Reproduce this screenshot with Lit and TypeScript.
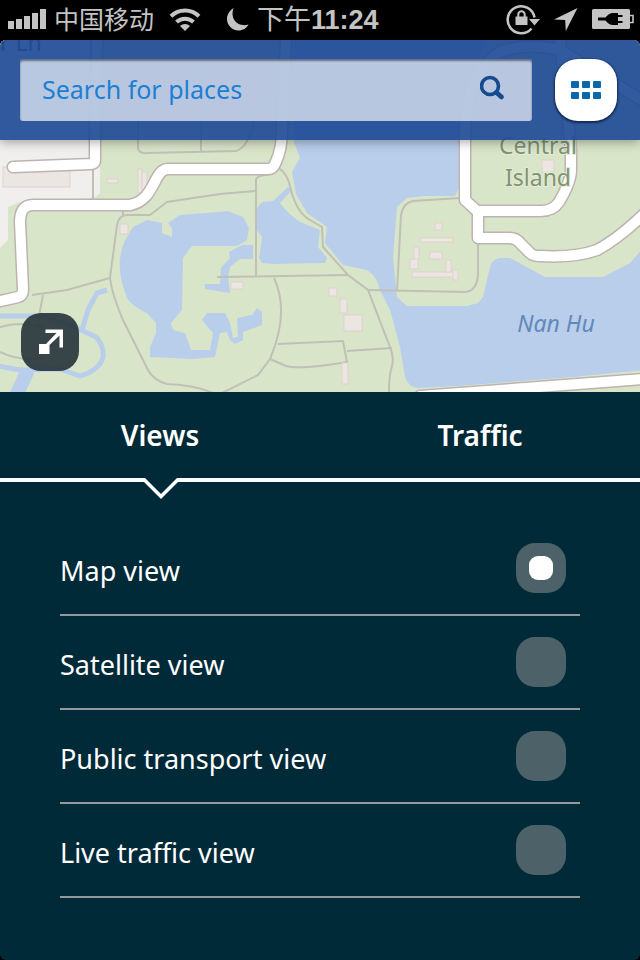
import { LitElement, html, css, svg } from "lit";
import { customElement, state } from "lit/decorators.js";
import { classMap } from "lit/directives/class-map.js";

@customElement("status-bar")
class StatusBar extends LitElement {
  static styles = css`
    :host {
      display: flex;
      align-items: center;
      height: 40px;
      padding: 0 6px 0 8px;
      background: #000;
      color: #c4c4c4;
      font-family: "Liberation Sans", "Noto Sans CJK SC", sans-serif;
      line-height: 40px;
      white-space: nowrap;
    }
    svg {
      display: block;
      flex: none;
      fill: currentColor;
    }
    .carrier {
      margin: 0 15px 0 8px;
      font-size: 25px;
    }
    .moon {
      margin: 0 8px 0 26px;
    }
    .time {
      display: flex;
      font-size: 27px;
    }
    .clock {
      font-weight: bold;
    }
    .right {
      display: flex;
      align-items: center;
      gap: 14px;
      margin-left: auto;
    }
  `;

  render() {
    return html`
      <svg width="38" height="22" viewBox="0 0 38 22">
        <path d="M0 12h6v8H0zM8 10h6v10H8zM16 7h6v13h-6zM24 4h6v16h-6zM32 0h6v20h-6z" />
      </svg>
      <span class="carrier">中国移动</span>
      <svg width="32" height="24" viewBox="0 0 32 24">
        <path
          d="M2 8.200a20 20 0 0 1 28 0M7.500 14a12.500 12.500 0 0 1 17 0"
          fill="none" stroke="currentColor" stroke-width="4" />
        <path d="M11 18a7.400 7.400 0 0 1 10 0l-5 5z" />
      </svg>
      <svg class="moon" width="22" height="24" viewBox="0 0 22 24">
        <path d="M6.500 0C2.500 2.600 0 6.400 0 11c0 6.200 5 11.500 11.500 11.500 4.500 0 8-2.200 10-6C12 19.500 2.500 12 6.500 0z" />
      </svg>
      <span class="time"><span>下午</span><span class="clock">11:24</span></span>
      <span class="right">
        <svg width="35" height="32" viewBox="-2 0 35 32">
          <path
            d="M27.500 13.500A13.500 13.500 0 1 0 24.500 24.500"
            fill="none" stroke="currentColor" stroke-width="2.600" />
          <path d="M22 15h11l-5.500 6.500z" />
          <path d="M8.500 12.500h12v8.500h-12z" />
          <path
            d="M11.300 13v-2.500a3.200 3.200 0 0 1 6.400 0v2.500"
            fill="none" stroke="currentColor" stroke-width="2" />
        </svg>
        <svg width="24" height="24" viewBox="0 0 24 24">
          <path d="M23.500 0L11.800 23l-.6-11L0 11.500z" />
        </svg>
        <svg width="42" height="22" viewBox="0 0 42 22">
          <path
            fill-rule="evenodd"
            d="M1.500 0h35a1.500 1.500 0 0 1 1.500 1.500v17a1.500 1.500 0 0 1-1.500 1.500h-35A1.500 1.500 0 0 1 0 18.500v-17A1.500 1.500 0 0 1 1.500 0zM6 8.500v3h7.500c2 2.500 4.500 4.500 7.500 4.500h5v-2h4.500v-2H26V8h4.500V6H26V4h-5c-3 0-5.500 2-7.500 4.500z" />
          <path d="M38 6.500h3v7h-3" fill="none" stroke="currentColor" stroke-width="1.600" />
        </svg>
      </span>
    `;
  }
}

const roads = [
  "M13 167L91 164Q95 164 95 160V130L97 40",
  "M-4 302L18 297Q23 296 23 289L20 222Q20 205 33 205H130C156 200 153 169 168 169H268Q273 169 275 164Q282 150 282 130L286 40",
  "M465 130V200L477 211H541Q553 211 559 202Q571 182 571 170V150L560 40",
  "M465 140Q464 75 500 52Q525 42 560 50L650 105",
  "M478 211V238H510Q516 238 520 243L530 253Q533 256 540 256Q575 258 597 250Q618 239 644 214",
  "M420 396L644 379",
];

const footpaths = [
  "M32 295L67 290L110 278L117 225Q119 215 127 215H150L167 202L220 194L255 191",
  "M110 278Q112 295 123 320L148 370Q153 380 167 384Q195 385 213 393",
  "M93 168V200M123 205V216M43 295L37 327",
  "M0 327Q20 321 43 327M0 352Q20 362 43 358",
  "M256 276V180Q256 175 273 174",
  "M279 168Q288 174 291 190Q297 213 310 220L322 227L323 247L348 275L368 290L390 347Q395 358 391 370Q389 377 389 393",
  "M217 277L348 275M274 278Q290 312 270 359L258 375L222 393",
  "M278 344L343 341L347 362Q300 370 286 366L270 359M347 351L392 348",
  "M368 290L465 292Q478 291 478 272V240M397 291L401 215Q403 203 413 201L460 198",
  "M138 90V148Q139 154 147 153L236 151Q246 148 252 130L262 90M201 60V152",
];

const ponds = [
  "M294 40V142L300 158L292 172L296 194L307 213L327 227L325 243L343 265L367 270Q377 276 380 290L390 310L400 347L405 377Q408 387 418 388L457 386L573 377L644 370V247L630 263L603 277H545L510 258H500Q491 260 490 267L483 297L478 303L467 306H407L397 297L393 257L397 207L407 198L423 196H455L459 188L460 130Q462 80 490 40Z",
  "M257 208L262 202L273 201L288 187L292 190L280 203Q288 214 300 222L320 230L318 247L327 258L325 263L272 264L262 263L259 258L262 237L257 230Z",
  "M133 227L147 220L162 223V233L172 237V228L168 223L180 215L218 212L228 211L243 217L249 228L247 240L237 246H192L183 258L182 310L171 323L173 330L185 333L191 350H210L213 333L202 320L207 313H225L230 323L233 338L238 337L237 318L252 315L257 308L262 312V325L243 332V340L235 344L230 340L227 332L220 333L215 357L192 359L150 357V347L156 333V323L147 313Q129 305 126 295Q114 265 125 240Z",
  "M242 245H253V259H240L230 267L228 277L230 293L205 289V284H220L221 268L230 258L229 252Z",
];

const buildings = [
  [107, 179, 11, 4], [138, 169, 4, 24], [142, 172, 5, 19], [231, 282, 12, 7],
  [329, 288, 8, 8], [340, 299, 7, 14], [344, 315, 18, 16], [342, 363, 6, 21],
  [435, 223, 7, 7], [420, 238, 33, 4], [430, 252, 12, 7], [414, 247, 5, 14],
  [410, 259, 8, 10], [412, 272, 42, 5], [446, 260, 5, 12], [453, 270, 5, 10],
  [542, 160, 12, 12], [120, 224, 8, 10],
];

@customElement("city-map")
class CityMap extends LitElement {
  static styles = css`
    :host {
      display: block;
      overflow: hidden;
      background: #d9e5c9;
    }
    .canvas {
      display: block;
      width: 100%;
      height: 100%;
    }
    .land { fill: #f1efed; }
    .water { fill: #b9ceeb; }
    .stream { fill: none; stroke: #b9ceeb; stroke-width: 5; stroke-linejoin: round; }
    .wide { stroke-width: 14; }
    .path { fill: none; stroke: #bfc0b6; stroke-width: 2; }
    .building { fill: #ece6e3; stroke: #dfd1ce; stroke-width: 1; }
    .casing, .road { fill: none; stroke-linejoin: round; stroke-linecap: round; }
    .casing { stroke: #bdb3b0; stroke-width: 13; }
    .road { stroke: #fff; stroke-width: 10; }
    .label {
      font: 23px "Noto Sans", sans-serif;
      fill: #7f9570;
      stroke: #e4ecd9;
      stroke-width: 2;
      paint-order: stroke;
      text-anchor: middle;
    }
    .lake { fill: #6288bb; stroke: none; font-style: italic; }
    .street { fill: #555; text-anchor: start; }
  `;

  render() {
    return html`
      <svg class="canvas" viewBox="0 40 640 352" preserveAspectRatio="xMidYMid slice">
        <path class="land" d="M0 40H100V193L94 198L20 202L8 207V240L0 248Z" />
        <rect class="building" x="3" y="167" width="67" height="20" />
        ${ponds.map((d) => svg`<path class="water" d=${d} />`)}
        <path class="stream" d="M-2 316H43L77 328L96 337Q104 345 103 357Q100 370 80 376L60 369L20 370L-2 366" />
        <path class="stream" d="M82 330L88 310L97 293L107 290" />
        <path class="stream wide" d="M28 370L16 396" />
        ${footpaths.map((d) => svg`<path class="path" d=${d} />`)}
        ${buildings.map(
          ([x, y, w, h]) => svg`<rect class="building" x=${x} y=${y} width=${w} height=${h} />`
        )}
        ${roads.map((d) => svg`<path class="casing" d=${d} />`)}
        ${roads.map((d) => svg`<path class="road" d=${d} />`)}
        <text class="label street" x="0" y="51">r Ln</text>
        <text class="label" x="538" y="154">Central</text>
        <text class="label" x="538" y="186">Island</text>
        <text class="label lake" x="556" y="332">Nan Hu</text>
      </svg>
    `;
  }
}

const views = ["Map view", "Satellite view", "Public transport view", "Live traffic view"];
const tabs = ["Views", "Traffic"];

@customElement("app-root")
class AppRoot extends LitElement {
  @state() tab = 0;
  @state() view = 0;

  static styles = css`
    :host {
      display: flex;
      flex-direction: column;
      min-height: 100vh;
      background: #000;
      color: #fff;
      font-family: "Noto Sans", "Open Sans", sans-serif;
      font-size: 27px;
    }
    * { box-sizing: border-box; }
    button { font: inherit; color: inherit; border: 0; padding: 0; cursor: pointer; }
    .app {
      flex: 1;
      display: flex;
      flex-direction: column;
      border-radius: 6px;
      overflow: hidden;
      background: #012a39;
    }
    .stage {
      position: relative;
      display: flex;
      flex-direction: column;
      justify-content: space-between;
      height: 352px;
    }
    .map { position: absolute; inset: 0; }
    .header {
      position: relative;
      display: flex;
      align-items: center;
      gap: 23px;
      height: 100px;
      padding: 0 23px 0 20px;
      background: rgba(29, 74, 150, 0.91);
      box-shadow: 0 2px 10px rgba(0, 0, 0, 0.35);
    }
    .search {
      flex: 1;
      display: flex;
      align-items: center;
      min-width: 0;
      height: 62px;
      padding: 0 26px 2px 22px;
      border-radius: 3px;
      background: rgba(219, 228, 240, 0.8);
      box-shadow: inset 0 2px 2px rgba(40, 50, 70, 0.6);
    }
    .field {
      flex: 1;
      min-width: 0;
      border: 0;
      padding: 0;
      outline: 0;
      background: none;
      font: inherit;
      font-size: 25px;
      color: #1c7fd4;
    }
    .field::placeholder { color: #1c7fd4; opacity: 1; }
    .find { display: block; background: none; }
    .find svg, .apps svg, .expand svg { display: block; }
    .apps {
      display: grid;
      place-items: center;
      width: 62px;
      height: 62px;
      border-radius: 23px;
      background: #fff;
      box-shadow: 0 1px 2px 1px rgba(10, 25, 60, 0.75);
    }
    .expand {
      position: relative;
      display: grid;
      place-items: center;
      width: 58px;
      height: 58px;
      margin: 0 0 21px 21px;
      border-radius: 20px;
      background: rgba(33, 47, 54, 0.88);
    }
    .tabs {
      display: flex;
      height: 90px;
      border-bottom: 4px solid #fff;
    }
    .tab {
      position: relative;
      flex: 1;
      background: none;
      font-size: 28px;
      font-weight: 600;
    }
    .notch {
      position: absolute;
      top: 100%;
      left: 50%;
      margin-left: -17px;
      display: block;
    }
    .options {
      margin: 40px 60px 60px;
      padding: 0;
      border: 0;
      min-width: 0;
    }
    .option {
      display: flex;
      align-items: center;
      justify-content: space-between;
      height: 94px;
      padding-right: 14px;
      border-bottom: 2px solid #919b9d;
      cursor: pointer;
    }
    .name { padding-top: 4px; }
    .radio {
      appearance: none;
      display: grid;
      place-items: center;
      width: 50px;
      height: 50px;
      margin: 0;
      border-radius: 19px;
      background: #4c6268;
    }
    .radio:checked::before {
      content: "";
      width: 24px;
      height: 24px;
      border-radius: 9px;
      background: #fff;
    }
  `;

  render() {
    return html`
      <status-bar></status-bar>
      <main class="app">
        <section class="stage">
          <city-map class="map"></city-map>
          <header class="header">
            <form class="search" @submit=${(e: Event) => e.preventDefault()}>
              <input class="field" type="text" placeholder="Search for places" aria-label="Search for places" />
              <button class="find" type="submit" aria-label="Search">
                <svg width="26" height="30" viewBox="0 0 26 30" fill="none" stroke="#164a8f">
                  <circle cx="10" cy="12" r="8.500" stroke-width="3.600" />
                  <path d="M16.500 18.500L21.500 23" stroke-width="4.800" stroke-linecap="round" />
                </svg>
              </button>
            </form>
            <button class="apps" aria-label="Menu">
              <svg width="30" height="18" viewBox="0 0 30 18" fill="#0a67a9">
                ${[0, 11, 22].map((x) =>
                  [0, 11].map((y) => svg`<rect x=${x} y=${y} width="8" height="7" rx="1" />`)
                )}
              </svg>
            </button>
          </header>
          <button class="expand" aria-label="Expand map">
            <svg width="26" height="26" viewBox="0 0 26 26" fill="#fff">
              <path d="M8.500 0.500H26V18.500H22.500V6.500L12.500 16V25H2V15H9L19.500 4H8.500Z" />
            </svg>
          </button>
        </section>
        <nav class="tabs">
          ${tabs.map(
            (name, i) => html`
              <button class=${classMap({ tab: true, active: this.tab === i })} @click=${() => (this.tab = i)}>
                ${name}
                ${this.tab === i
                  ? html`<svg class="notch" width="36" height="22" viewBox="0 0 36 22">
                      <path d="M1 0H35V4L18 21L1 4Z" fill="#012a39" />
                      <path d="M0 0H2L18 16L34 0H36V4H35L18 21L1 4H0Z" fill="#fff" />
                    </svg>`
                  : ""}
              </button>
            `
          )}
        </nav>
        <fieldset class="options" aria-label="Map views">
          ${views.map(
            (name, i) => html`
              <label class="option">
                <span class="name">${name}</span>
                <input
                  class="radio"
                  type="radio"
                  name="view"
                  .checked=${this.view === i}
                  @change=${() => (this.view = i)} />
              </label>
            `
          )}
        </fieldset>
      </main>
    `;
  }
}
